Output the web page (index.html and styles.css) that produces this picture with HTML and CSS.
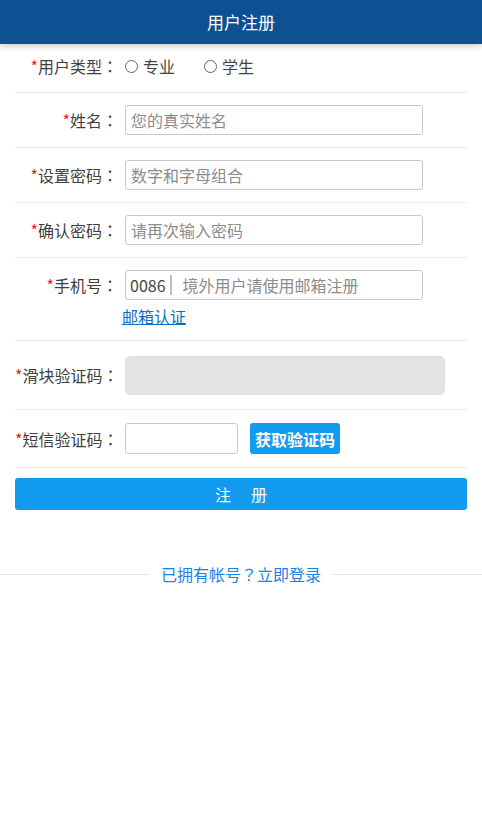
FILE: index.html
```html
<!DOCTYPE html>
<html lang="zh-CN">
<head>
<meta charset="utf-8">
<title>用户注册</title>
<link rel="stylesheet" href="styles.css">
</head>
<body>
<header class="topbar">用户注册</header>
<form class="form">
  <div class="row row-type">
    <label class="label"><span class="req">*</span>用户类型<span class="punct" lang="zh-TW">：</span></label>
    <div class="radios">
      <span class="radio"><span class="circle"></span>专业</span>
      <span class="radio"><span class="circle"></span>学生</span>
    </div>
  </div>
  <div class="row row-input">
    <label class="label"><span class="req">*</span>姓名<span class="punct" lang="zh-TW">：</span></label>
    <input class="input" type="text" placeholder="您的真实姓名">
  </div>
  <div class="row row-input">
    <label class="label"><span class="req">*</span>设置密码<span class="punct" lang="zh-TW">：</span></label>
    <input class="input" type="text" placeholder="数字和字母组合">
  </div>
  <div class="row row-input">
    <label class="label"><span class="req">*</span>确认密码<span class="punct" lang="zh-TW">：</span></label>
    <input class="input" type="text" placeholder="请再次输入密码">
  </div>
  <div class="row row-phone">
    <label class="label"><span class="req">*</span>手机号<span class="punct" lang="zh-TW">：</span></label>
    <div class="phone-col">
      <div class="input phone-box"><span class="code">0086</span><span class="sep"></span><span class="ph">境外用户请使用邮箱注册</span></div>
      <a class="mail-link" href="#">邮箱认证</a>
    </div>
  </div>
  <div class="row row-slider">
    <label class="label"><span class="req">*</span>滑块验证码<span class="punct" lang="zh-TW">：</span></label>
    <div class="slider"></div>
  </div>
  <div class="row row-sms">
    <label class="label"><span class="req">*</span>短信验证码<span class="punct" lang="zh-TW">：</span></label>
    <input class="input sms-input" type="text">
    <button type="button" class="sms-btn">获取验证码</button>
  </div>
  <button type="button" class="submit">注册</button>
</form>
<div class="login-line"><a href="#" class="login-link">已拥有帐号<span class="punct" lang="zh-TW">？</span>立即登录</a></div>
</body>
</html>
```
FILE: styles.css
```css
* { box-sizing: border-box; }
body {
  margin: 0;
  background: #fff;
  font-family: "Noto Sans CJK SC", "Microsoft YaHei", sans-serif;
  font-size: 16px;
  color: #444;
}
.punct {
  font-family: "Noto Sans CJK TC", "Noto Sans CJK SC", sans-serif;
}
.topbar {
  height: 44px;
  line-height: 44px;
  background: #0d5192;
  color: #fff;
  text-align: center;
  font-size: 17px;
  box-shadow: 0 2px 6px rgba(0,0,0,0.22);
  position: relative;
  z-index: 1;
}
.form {
  margin: 0 15px;
}
.row {
  display: flex;
  align-items: center;
  border-bottom: 1px solid #ececec;
}
.row-type { height: 49px; padding-bottom: 4px; }
.row-input { height: 55px; }
.row-phone { height: 83px; align-items: flex-start; padding-top: 12px; }
.row-phone .label { line-height: 30px; }
.row-slider { height: 69px; }
.row-sms { height: 58px; }
.label {
  width: 103px;
  margin-right: 7px;
  text-align: right;
  font-size: 16px;
  line-height: 20px;
  color: #3f3f3f;
  white-space: nowrap;
}
.req { color: #f01a1a; }
.radios { display: flex; align-items: center; }
.radio {
  display: flex;
  align-items: center;
  margin-right: 29px;
  line-height: 20px;
}
.circle {
  width: 13px;
  height: 13px;
  border: 1px solid #666;
  border-radius: 50%;
  margin-right: 5px;
}
.input {
  width: 298px;
  height: 30px;
  border: 1px solid #c9c9c9;
  border-radius: 3px;
  padding: 0 5px;
  font-family: inherit;
  font-size: 16px;
  color: #444;
  outline: none;
}
.input::placeholder { color: #8c8c8c; }
.phone-col { display: flex; flex-direction: column; }
.phone-box {
  display: flex;
  align-items: center;
  padding: 0 4px;
}
.code { color: #444; }
.sep {
  width: 2px;
  height: 20px;
  background: #bdbdbd;
  margin: 0 11px 0 4px;
}
.ph { color: #8c8c8c; }
.mail-link {
  margin-top: 5px;
  margin-left: -3px;
  color: #0a6fc2;
  text-decoration: underline;
  line-height: 22px;
  font-size: 16px;
}
.slider {
  width: 320px;
  height: 39px;
  background: #e4e4e4;
  border: 1px solid #dedede;
  border-radius: 5px;
}
.sms-input { width: 113px; height: 31px; }
.sms-btn {
  margin-left: 12px;
  width: 90px;
  height: 31px;
  border: none;
  border-radius: 3px;
  background: #139bef;
  color: #fff;
  font-family: inherit;
  font-size: 16px;
  font-weight: bold;
  padding: 0;
}
.submit {
  display: block;
  width: 100%;
  height: 32px;
  margin-top: 10px;
  border: none;
  border-radius: 3px;
  background: #119aee;
  color: #fff;
  font-family: inherit;
  font-size: 16px;
  letter-spacing: 20px;
  text-indent: 20px;
  padding: 0;
}
.login-line {
  display: flex;
  align-items: center;
  margin-top: 53px;
  gap: 12px;
}
.login-line::before,
.login-line::after {
  content: "";
  flex: 1;
  height: 1px;
  background: #e3e3e3;
}
.login-link {
  color: #1a82e6;
  text-decoration: none;
  font-size: 16px;
  line-height: 22px;
}
```
